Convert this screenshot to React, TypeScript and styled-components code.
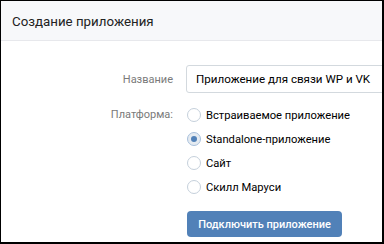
import React from "react";
import styled, { createGlobalStyle } from "styled-components";

const platforms = [
  "Встраиваемое приложение",
  "Standalone-приложение",
  "Сайт",
  "Скилл Маруси",
];

export default function App() {
  const selected = 1;
  return (
    <>
      <GlobalStyle />
      <Frame>
        <Header>
          <Title>Создание приложения</Title>
        </Header>
        <Form>
          <Row>
            <Label>Название</Label>
            <Input defaultValue="Приложение для связи WP и VK" />
          </Row>
          <Row $top>
            <Label $radio>Платформа:</Label>
            <RadioList>
              {platforms.map((p, i) => (
                <RadioRow key={p}>
                  <Radio $checked={i === selected} />
                  <RadioText>{p}</RadioText>
                </RadioRow>
              ))}
            </RadioList>
          </Row>
          <Row>
            <Label />
            <Button>Подключить приложение</Button>
          </Row>
        </Form>
      </Frame>
    </>
  );
}

const GlobalStyle = createGlobalStyle`
  body {
    margin: 0;
    background: #000;
    font-family: Roboto, "Open Sans", Arial, sans-serif;
  }
`;

const Frame = styled.div`
  width: 384px;
  height: 244px;
  box-sizing: border-box;
  border-style: solid;
  border-color: #000;
  border-width: 1px 2px 2px 1px;
  background: #fff;
  overflow: hidden;
`;

const Header = styled.div`
  height: 39px;
  background: #f7f8fa;
  border-bottom: 1px solid #e7e8ec;
  display: flex;
  align-items: center;
  padding-left: 11px;
`;

const Title = styled.div`
  font-size: 13.3px;
  color: #222;
  margin-top: 2px;
`;

const Form = styled.div`
  display: flex;
  flex-direction: column;
  padding-top: 24px;
`;

const Row = styled.div<{ $top?: boolean }>`
  display: flex;
  align-items: ${(p) => (p.$top ? "flex-start" : "center")};
  gap: 13px;
  margin-bottom: 10px;
  &:last-child {
    margin-top: 2px;
  }
`;

const Label = styled.div<{ $radio?: boolean }>`
  width: 172px;
  flex-shrink: 0;
  text-align: right;
  font-size: 11px;
  color: #7a7a7a;
  line-height: ${(p) => (p.$radio ? "24px" : "normal")};
`;

const Input = styled.input`
  width: 230px;
  flex-shrink: 0;
  height: 28px;
  box-sizing: border-box;
  border: 1px solid #d3d9de;
  border-radius: 3px;
  padding: 0 9px;
  font-family: inherit;
  font-size: 11.6px;
  color: #000;
  outline: none;
`;

const RadioList = styled.div`
  display: flex;
  flex-direction: column;
`;

const RadioRow = styled.div`
  display: flex;
  align-items: center;
  height: 24px;
  gap: 5px;
  padding-left: 1px;
`;

const Radio = styled.span<{ $checked?: boolean }>`
  width: 14px;
  height: 14px;
  box-sizing: border-box;
  border-radius: 50%;
  border: 1px solid ${(p) => (p.$checked ? "#a8c0dc" : "#c5d0db")};
  background: ${(p) => (p.$checked ? "#e5ebf1" : "#fff")};
  display: flex;
  align-items: center;
  justify-content: center;
  &::after {
    content: "";
    display: ${(p) => (p.$checked ? "block" : "none")};
    width: 6px;
    height: 6px;
    border-radius: 50%;
    background: #5181b8;
  }
`;

const RadioText = styled.span`
  font-size: 11.2px;
  color: #000;
`;

const Button = styled.button`
  height: 26px;
  width: 155px;
  margin-left: 1px;
  border: none;
  border-radius: 4px;
  background: #5181b8;
  color: #fff;
  font-family: inherit;
  font-size: 11px;
  font-weight: 500;
  padding: 0;
`;
